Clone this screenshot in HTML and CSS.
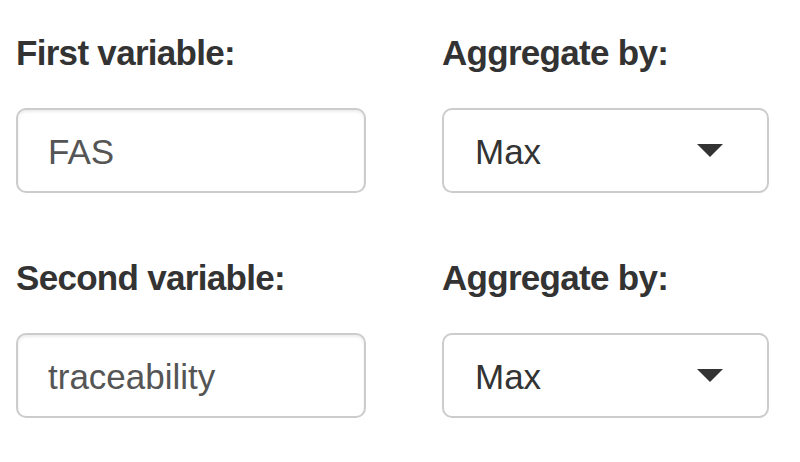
FILE: index.html
```html
<!DOCTYPE html>
<html>
<head>
<meta charset="utf-8">
<link rel="stylesheet" href="styles.css">
</head>
<body>
<div class="form">
  <div class="group">
    <label class="label">First variable:</label>
    <div class="input text-input">FAS</div>
  </div>
  <div class="group">
    <label class="label">Aggregate by:</label>
    <div class="input select-input"><span>Max</span><span class="caret"></span></div>
  </div>
  <div class="group">
    <label class="label">Second variable:</label>
    <div class="input text-input">traceability</div>
  </div>
  <div class="group">
    <label class="label">Aggregate by:</label>
    <div class="input select-input"><span>Max</span><span class="caret"></span></div>
  </div>
</div>
</body>
</html>
```
FILE: styles.css
```css
html, body {
  margin: 0;
  padding: 0;
  background: #fff;
}
body {
  font-family: "Liberation Sans", Arial, Helvetica, sans-serif;
  width: 800px;
  height: 462px;
  overflow: hidden;
}
.form {
  display: grid;
  grid-template-columns: 350px 327px;
  column-gap: 76px;
  row-gap: 60px;
  padding: 28px 0 0 16px;
}
.group {
  display: flex;
  flex-direction: column;
}
.label {
  font-size: 35px;
  line-height: 50px;
  font-weight: bold;
  color: #333;
  letter-spacing: -0.7px;
  margin-bottom: 30px;
}
.input {
  box-sizing: border-box;
  height: 85px;
  border: 2px solid #cccccc;
  border-radius: 10px;
  font-size: 35px;
  display: flex;
  align-items: center;
  padding: 0 30px;
}
.text-input {
  color: #555;
  box-shadow: inset 0 2px 3px rgba(0,0,0,0.075);
  padding-top: 3px;
}
.select-input {
  color: #333;
  justify-content: space-between;
  padding-left: 31px;
  padding-right: 44px;
  padding-top: 3px;
}
.caret {
  width: 0;
  height: 0;
  border-left: 13px solid transparent;
  border-right: 13px solid transparent;
  border-top: 13px solid #333;
  margin-top: -4px;
}
```
